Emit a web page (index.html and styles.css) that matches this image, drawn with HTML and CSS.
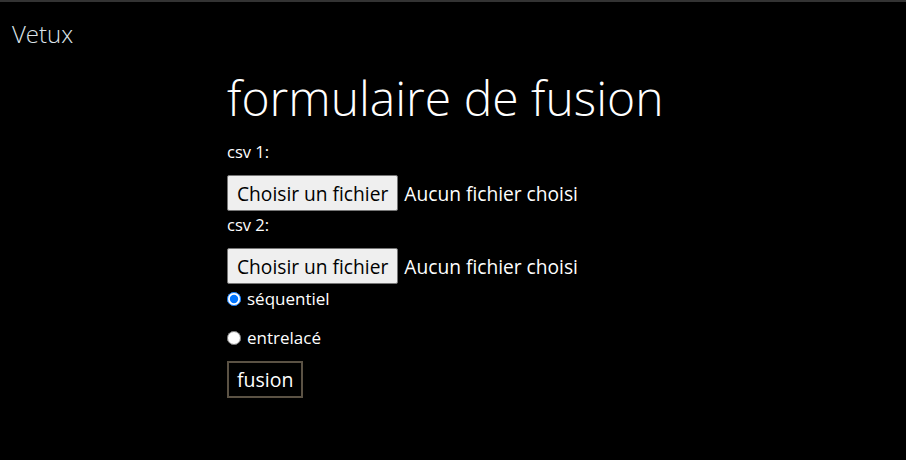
FILE: index.html
```html
<!DOCTYPE html>
<html lang="fr">
<head>
<meta charset="utf-8">
<title>formulaire de fusion</title>
<link rel="stylesheet" href="styles.css">
</head>
<body>
<div class="topbar"></div>
<header class="brand">Vetux</header>
<main class="content">
  <h1 class="title">formulaire de fusion</h1>
  <form class="form">
    <label class="lbl first">csv 1:</label>
    <div class="file">
      <span class="file-btn">Choisir un fichier</span>
      <span class="file-name">Aucun fichier choisi</span>
    </div>
    <label class="lbl">csv 2:</label>
    <div class="file">
      <span class="file-btn">Choisir un fichier</span>
      <span class="file-name">Aucun fichier choisi</span>
    </div>
    <label class="radio r1"><input type="radio" name="mode" checked> séquentiel</label>
    <label class="radio r2"><input type="radio" name="mode"> entrelacé</label>
    <button type="button" class="submit">fusion</button>
  </form>
</main>
</body>
</html>
```
FILE: styles.css
```css
html, body {
  margin: 0;
  padding: 0;
  background: #000;
  color: #fff;
  font-family: "Open Sans", "Noto Sans", sans-serif;
}
.topbar {
  height: 2px;
  background: #333;
}
.brand {
  padding: 16px 0 0 12px;
  font-size: 24px;
  font-weight: 300;
  line-height: 32px;
  color: #dde4ea;
}
.content {
  padding-left: 227px;
}
.title {
  margin: 16px 0 0 0;
  font-size: 48px;
  font-weight: 300;
  line-height: 64px;
}
.form {
  display: flex;
  flex-direction: column;
  align-items: flex-start;
}
.lbl {
  font-size: 16.5px;
  line-height: 22px;
  margin-top: 3px;
}
.lbl.first {
  margin-top: 11px;
}
.file {
  display: flex;
  align-items: center;
  margin-top: 12px;
}
.file-btn {
  box-sizing: border-box;
  height: 36px;
  padding: 0 9px;
  display: flex;
  align-items: center;
  background: #efefef;
  color: #000;
  border: 1px solid #767676;
  border-radius: 2px;
  font-size: 19.2px;
  font-family: "Open Sans", "Noto Sans", sans-serif;
}
.file-name {
  margin-left: 6px;
  font-size: 19.2px;
}
.radio {
  display: flex;
  align-items: center;
  font-size: 17px;
  line-height: 22px;
}
.radio input {
  margin: 0 6px 0 0;
  width: 14px;
  height: 14px;
}
.r1 { margin-top: 4px; }
.r2 { margin-top: 17px; }
.submit {
  margin-top: 12px;
  box-sizing: border-box;
  height: 37px;
  padding: 0 8px;
  background: #000;
  color: #fff;
  border: 2px solid #5b5244;
  font-size: 19.5px;
  font-family: "Open Sans", "Noto Sans", sans-serif;
}
```
